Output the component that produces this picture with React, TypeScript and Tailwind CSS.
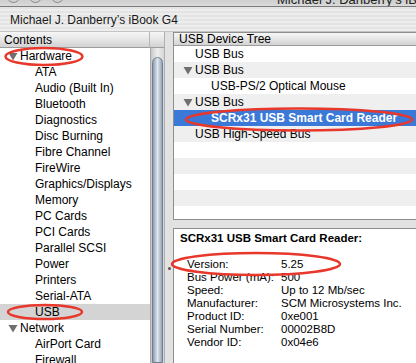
import React from "react"

const font = { fontFamily: '"Liberation Sans", Arial, sans-serif' }

function Triangle() {
  return (
    <svg width="10" height="9" viewBox="0 0 10 9" className="shrink-0">
      <polygon points="0.5,1 9.5,1 5,8.5" fill="#6f6f6f" />
    </svg>
  )
}

const hardware = [
  "ATA",
  "Audio (Built In)",
  "Bluetooth",
  "Diagnostics",
  "Disc Burning",
  "Fibre Channel",
  "FireWire",
  "Graphics/Displays",
  "Memory",
  "PC Cards",
  "PCI Cards",
  "Parallel SCSI",
  "Power",
  "Printers",
  "Serial-ATA",
  "USB",
]

const tree: { label: string; level: number; open?: boolean }[] = [
  { label: "USB Bus", level: 1 },
  { label: "USB Bus", level: 1, open: true },
  { label: "USB-PS/2 Optical Mouse", level: 2 },
  { label: "USB Bus", level: 1, open: true },
  { label: "SCRx31 USB Smart Card Reader", level: 2 },
  { label: "USB High-Speed Bus", level: 1 },
]

const details = [
  ["Version:", "5.25"],
  ["Bus Power (mA):", "500"],
  ["Speed:", "Up to 12 Mb/sec"],
  ["Manufacturer:", "SCM Microsystems Inc."],
  ["Product ID:", "0xe001"],
  ["Serial Number:", "00002B8D"],
  ["Vendor ID:", "0x04e6"],
]

function Header({ children }: { children?: React.ReactNode }) {
  return (
    <div className="h-[16px] flex items-center px-[4px] text-[12px] leading-none text-black bg-gradient-to-b from-[#f6f6f6] via-[#e6e6e6] to-[#d2d2d2] border-b border-[#9c9c9c]">
      {children}
    </div>
  )
}

export default function App() {
  return (
    <div
      className="relative w-[416px] h-[363px] overflow-hidden bg-[#e6e6e6] text-black flex flex-col"
      style={font}
    >
      {/* title bar, cut off at the top */}
      <div className="h-[7px] shrink-0 overflow-hidden flex items-end bg-gradient-to-b from-[#cfcfcf] to-[#dadada] border-b border-[#7c7c7c]">
        <div className="flex items-end gap-[9px] pl-[7px] w-[277px] shrink-0">
          <div className="w-[13px] h-[13px] rounded-full border border-[#8a8a8a] bg-[#d0d0d0] shrink-0 -translate-y-[3px]" />
          <div className="w-[13px] h-[13px] rounded-full border border-[#8a8a8a] bg-[#d0d0d0] shrink-0 -translate-y-[3px]" />
          <div className="w-[13px] h-[13px] rounded-full border border-[#8a8a8a] bg-[#d0d0d0] shrink-0 -translate-y-[3px]" />
        </div>
        <div className="text-[13px] leading-[13px] text-[#222] whitespace-nowrap">
          Michael J. Danberry’s iBook G4
        </div>
      </div>

      {/* toolbar strip */}
      <div className="h-[25px] shrink-0 flex items-center pl-[10px] pt-[1px] text-[12px] text-[#1a1a1a] bg-[repeating-linear-gradient(0deg,#ededed_0px,#ededed_2px,#e4e4e4_2px,#e4e4e4_4px)] border-b border-[#c4c4c4]">
        Michael J. Danberry’s iBook G4
      </div>

      <div className="flex flex-1 min-h-0">
        {/* left: contents */}
        <div className="w-[165px] shrink-0 flex flex-col border-r border-[#b0b0b0]">
          <div className="flex">
            <div className="w-[150px] border-r border-[#b4b4b4]">
              <Header>Contents</Header>
            </div>
            <div className="flex-1">
              <Header />
            </div>
          </div>
          <div className="flex flex-1 min-h-0">
            <div className="w-[150px] bg-white text-[12px] leading-[16px] overflow-hidden">
              <div className="h-[16px] flex items-center pl-[8px] gap-[2px]">
                <Triangle />
                <span>Hardware</span>
              </div>
              {hardware.map((h) => (
                <div
                  key={h}
                  className={
                    h === "USB"
                      ? "h-[16px] pl-[35px] bg-[#d4d4d4] whitespace-nowrap"
                      : "h-[16px] pl-[35px] whitespace-nowrap"
                  }
                >
                  {h}
                </div>
              ))}
              <div className="h-[16px] flex items-center pl-[8px] gap-[2px]">
                <Triangle />
                <span>Network</span>
              </div>
              <div className="h-[16px] pl-[35px] whitespace-nowrap">AirPort Card</div>
              <div className="h-[16px] pl-[35px] whitespace-nowrap">Firewall</div>
            </div>
            {/* scrollbar */}
            <div className="flex-1 flex flex-col bg-gradient-to-r from-[#c9c9c9] via-[#eeeeee] to-[#d6d6d6] border-l border-[#a8a8a8] pt-[9px] px-[1px]">
              <div className="flex-1 rounded-t-full border border-[#6f7f92] bg-gradient-to-r from-[#8e9db0] via-[#dfe7f0] to-[#95a4b6]" />
            </div>
          </div>
        </div>

        {/* splitter with its grip dot */}
        <div className="w-[8px] shrink-0 bg-[#e2e2e2] flex flex-col items-center pt-[235px]">
          <div className="w-[3px] h-[3px] rounded-full bg-[#555]" />
        </div>

        {/* right side */}
        <div className="flex-1 flex flex-col min-w-0">
          <div className="h-[188px] shrink-0 border border-r-0 border-[#8e8e8e] bg-white flex flex-col overflow-hidden">
            <Header>
              <span className="pl-[1px]">USB Device Tree</span>
            </Header>
            <div className="flex-1 text-[12px] leading-[16px]">
              {Array.from({ length: 11 }).map((_, i) => {
                const row = tree[i]
                const selected = i === 4
                const bg = selected ? "bg-[#3b79d8] text-white font-bold" : i % 2 === 1 ? "bg-[#efefef]" : "bg-white"
                return (
                  <div key={i} className={"h-[16px] flex items-center whitespace-nowrap " + bg}>
                    {row && (
                      <>
                        <div className={row.level === 2 ? "w-[37px] shrink-0 flex justify-end pr-[2px]" : "w-[21px] shrink-0 flex justify-end pr-[2px]"}>
                          {row.open && <Triangle />}
                        </div>
                        <span>{row.label}</span>
                      </>
                    )}
                  </div>
                )
              })}
            </div>
          </div>

          <div className="h-[8px] shrink-0 bg-[#e2e2e2]" />

          <div className="flex-1 border-l border-t border-[#8e8e8e] bg-white pl-[6px] pt-[3px] text-[11.5px] leading-[13px]">
            <div className="font-bold whitespace-nowrap">SCRx31 USB Smart Card Reader:</div>
            <div className="h-[13px]" />
            <div className="pl-[7px]">
              {details.map(([k, v]) => (
                <div key={k} className="flex whitespace-nowrap">
                  <div className="w-[94px] shrink-0">{k}</div>
                  <div>{v}</div>
                </div>
              ))}
            </div>
          </div>
        </div>
      </div>

      {/* red annotation ellipses drawn over the screenshot */}
      <svg
        className="absolute inset-0 pointer-events-none"
        width="416"
        height="363"
        viewBox="0 0 416 363"
      >
        <g fill="none" stroke="#e8372b" strokeWidth="2.5">
          <ellipse cx="44" cy="56.5" rx="38.5" ry="8.5" />
          <ellipse cx="45" cy="312" rx="37" ry="7" />
          <ellipse cx="299" cy="119.5" rx="113" ry="11" />
          <ellipse cx="256" cy="264" rx="84" ry="11" />
        </g>
      </svg>
    </div>
  )
}
